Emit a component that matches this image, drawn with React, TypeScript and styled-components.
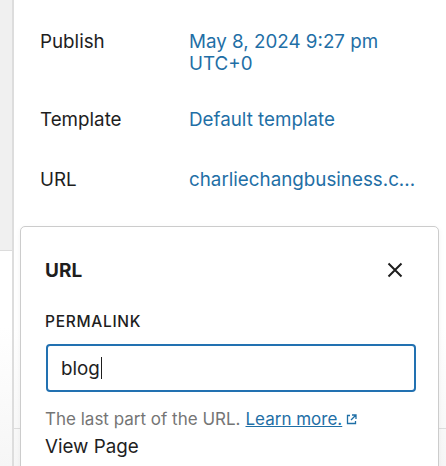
import React from "react";
import styled, { createGlobalStyle } from "styled-components";

const Global = createGlobalStyle`
  html, body { margin: 0; padding: 0; background: #ffffff; }
  body { font-family: Inter, "Liberation Sans", Arial, sans-serif; -webkit-font-smoothing: antialiased; }
  #root { width: 446px; height: 466px; overflow: hidden; }
`;

const Page = styled.div`
  display: flex;
  width: 446px;
  height: 466px;
  background: linear-gradient(#ffffff 70%, #f6f6f6 100%);
`;

const LeftStrip = styled.div`
  width: 12px;
  flex: none;
  display: flex;
  flex-direction: column;
  border-right: 2px solid #dddddd;
`;

const StripTop = styled.div`
  height: 250px;
  background: #f0f0f0;
  border-bottom: 1px solid #dcdcdc;
`;

const Main = styled.div`
  position: relative;
  flex: 1;
  display: flex;
  flex-direction: column;
`;

const Rows = styled.div`
  display: flex;
  flex-direction: column;
  padding: 31px 0 0 26px;
`;

const Row = styled.div<{ $h: number }>`
  display: grid;
  grid-template-columns: 149px 1fr;
  height: ${(p) => p.$h}px;
  align-items: start;
`;

const Label = styled.div`
  font-size: 18.8px;
  line-height: 22px;
  color: #1e1e1e;
`;

const Value = styled.div`
  font-size: 18.8px;
  line-height: 21.5px;
  color: #1f6fa6;
  white-space: nowrap;
`;

const Divider = styled.div`
  margin-top: auto;
  margin-bottom: 37px;
  border-top: 1px solid #dddddd;
`;

const Popover = styled.div`
  position: absolute;
  top: 226px;
  left: 6px;
  right: 7px;
  bottom: -10px;
  background: #ffffff;
  border: 1px solid #cccccc;
  border-radius: 5px;
  box-shadow: 0 2px 6px rgba(0, 0, 0, 0.05);
  padding: 31px 22px 0 24px;
  display: flex;
  flex-direction: column;
`;

const PopHeader = styled.div`
  display: flex;
  align-items: center;
  justify-content: space-between;
  height: 24px;
  padding-right: 9px;
`;

const PopTitle = styled.div`
  font-size: 19px;
  font-weight: 700;
  color: #1e1e1e;
`;

const CloseButton = styled.button`
  border: none;
  background: none;
  padding: 0;
  width: 24px;
  height: 24px;
  display: flex;
  align-items: center;
  justify-content: center;
  color: #1e1e1e;
`;

const FieldLabel = styled.div`
  margin-top: 31px;
  font-size: 15.5px;
  font-weight: 500;
  letter-spacing: 0.7px;
  color: #1e1e1e;
  line-height: 17px;
`;

const Input = styled.div`
  margin-top: 14px;
  margin-left: 1px;
  height: 44px;
  border: 2px solid #2271b1;
  border-radius: 4px;
  display: flex;
  align-items: center;
  padding-left: 13px;
  font-size: 18.8px;
  color: #1e1e1e;
`;

const Caret = styled.span`
  display: inline-block;
  width: 1px;
  height: 22px;
  background: #1e1e1e;
  margin-left: 1px;
`;

const Help = styled.div`
  margin-top: 17px;
  font-size: 17px;
  line-height: 20px;
  color: #757575;
  display: flex;
  align-items: center;
  white-space: nowrap;
`;

const HelpLink = styled.a`
  color: #1f6fa6;
  text-decoration: underline;
  margin-left: 5px;
`;

const ViewPage = styled.div`
  margin-top: 6px;
  font-size: 18.8px;
  color: #1e1e1e;
`;

export default function App() {
  return (
    <>
      <Global />
      <Page>
        <LeftStrip>
          <StripTop />
        </LeftStrip>
        <Main>
          <Rows>
            <Row $h={78}>
              <Label>Publish</Label>
              <Value>
                May 8, 2024 9:27 pm
                <br />
                UTC+0
              </Value>
            </Row>
            <Row $h={60}>
              <Label>Template</Label>
              <Value>Default template</Value>
            </Row>
            <Row $h={40}>
              <Label>URL</Label>
              <Value>charliechangbusiness.c...</Value>
            </Row>
          </Rows>
          <Divider />
          <Popover>
            <PopHeader>
              <PopTitle>URL</PopTitle>
              <CloseButton aria-label="Close">
                <svg width="18" height="18" viewBox="0 0 18 18">
                  <path d="M2.5 2.5 L15.5 15.5 M15.5 2.5 L2.5 15.5" stroke="#1e1e1e" strokeWidth="2" />
                </svg>
              </CloseButton>
            </PopHeader>
            <FieldLabel>PERMALINK</FieldLabel>
            <Input>
              blog
              <Caret />
            </Input>
            <Help>
              The last part of the URL.
              <HelpLink>Learn more.</HelpLink>
              <svg width="13" height="13" viewBox="0 0 13 13" style={{ marginLeft: 3 }}>
                <path d="M5 2.5 H2.5 V10.5 H10.5 V8 M7 2 H11 V6 M11 2 L6 7" stroke="#1f6fa6" strokeWidth="1.3" fill="none" />
              </svg>
            </Help>
            <ViewPage>View Page</ViewPage>
          </Popover>
        </Main>
      </Page>
    </>
  );
}
